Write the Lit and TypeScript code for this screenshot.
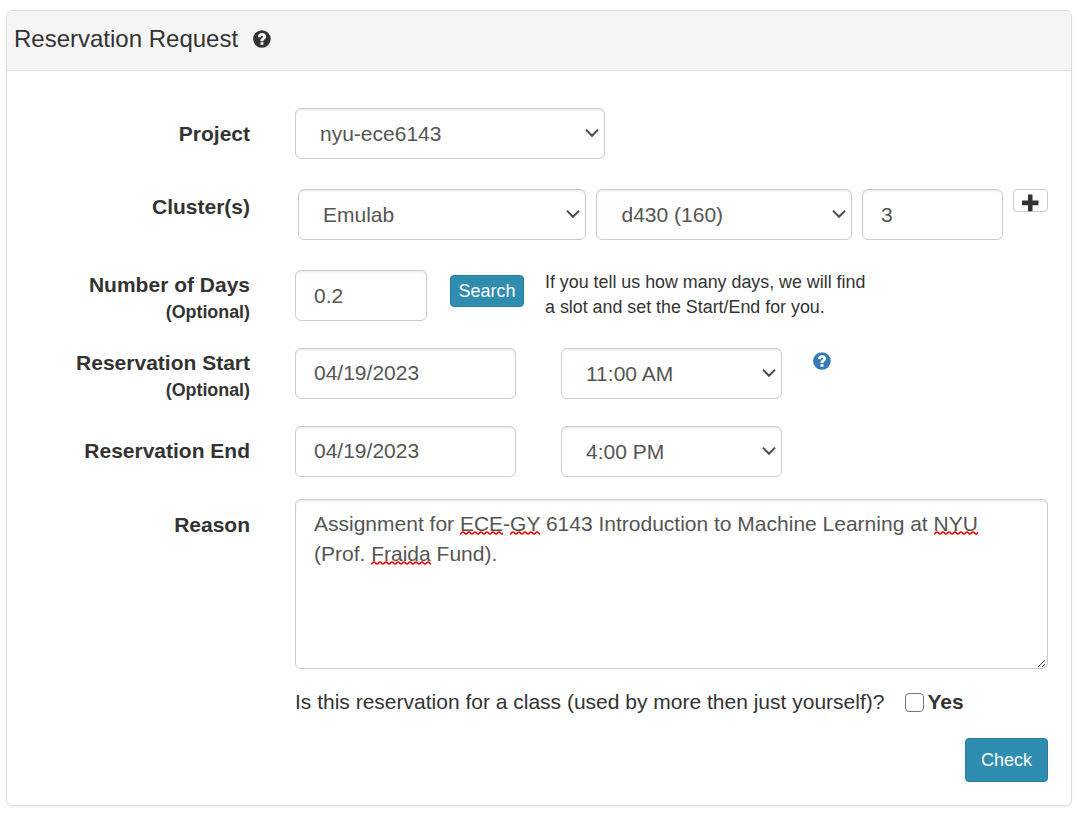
import { LitElement, html, svg, css } from "lit";
import { customElement } from "lit/decorators.js";

const chevron = html`<svg class="chev" width="16" height="12" viewBox="0 0 16 12">
  <path d="M2 2.600 8 8.800 14 2.600" fill="none" stroke="#4a4a4a" stroke-width="2" />
</svg>`;

const mark = svg`<path fill-rule="evenodd" d="M8.900 .2a8.800 8.800 0 1 1 0 17.600A8.800 8.800 0 0 1 8.900 .2ZM7.500 12.200v2.600h3v-2.600ZM4.900 7.200h2.900c0-1 .4-1.500 1.100-1.500.7 0 1.100.4 1.100.9 0 .5-.3.800-1 1.300-1.100.8-1.500 1.400-1.500 2.700v.600h3v-.2c0-.8.300-1.100 1.100-1.700 1-.7 1.500-1.500 1.500-2.700 0-2.100-1.600-3.500-4.100-3.500-2.400 0-4 1.400-4.100 4.100Z" />`;

const help = (cls: string) => html`<svg class=${cls} width="18" height="18" viewBox="0 0 18 18">${mark}</svg>`;

@customElement("app-root")
export class AppRoot extends LitElement {
  static styles = css`
    :host {
      display: block;
      box-sizing: border-box;
      height: 813px;
      padding: 10px 16px 7px 6px;
      background: #fff;
      color: #333;
      font: 21px/30px "Liberation Sans", Arial, sans-serif;
      overflow: hidden;
    }
    * { box-sizing: border-box; }
    .panel {
      height: 796px;
      border: 1px solid #ddd;
      border-radius: 6px;
      box-shadow: 0 1.5px 1.5px rgba(0, 0, 0, 0.05);
    }
    .head {
      display: flex;
      height: 60px;
      padding: 13px 7px;
      background: #f5f5f5;
      border-bottom: 1px solid #ddd;
      border-radius: 5px 5px 0 0;
      font-size: 24px;
    }
    .title { width: 239px; white-space: nowrap; }
    .dark { fill: #333; margin-top: 6px; }
    .blue { fill: #337ab7; margin: 4px 0 0 31px; }
    .body { padding-top: 37px; }
    .row { display: flex; align-items: flex-start; }
    .label {
      flex: none;
      width: 243px;
      margin-right: 45px;
      text-align: right;
      font-weight: bold;
      white-space: nowrap;
    }
    .label small { display: block; font-size: 17.85px; line-height: 24px; }
    .field {
      flex: none;
      display: flex;
      justify-content: space-between;
      height: 51px;
      padding: 10px 4px 9px 18px;
      border: 1px solid #ccc;
      border-radius: 6px;
      box-shadow: inset 0 1.5px 1.5px rgba(0, 0, 0, 0.075);
      color: #555;
      white-space: nowrap;
    }
    .select { padding-left: 24px; }
    .chev { flex: none; margin-top: 8px; }
    .project { height: 81px; }
    .project .label { padding-top: 11px; }
    .project .field { width: 310px; }
    .cluster { height: 81px; }
    .cluster .label { padding-top: 3px; margin-right: 48px; }
    .cluster .field { margin-right: 10px; }
    .site { width: 288px; }
    .type { width: 256px; padding-left: 24.5px; }
    .count { width: 141px; }
    .plus {
      display: flex;
      justify-content: center;
      width: 35px;
      height: 23px;
      padding-top: 4px;
      border: 1px solid #ccc;
      border-radius: 4px;
    }
    .plus svg { flex: none; }
    .days { height: 78px; }
    .days .field { width: 132px; }
    .search, .check {
      background: #2f8daf;
      border: 1px solid #297c9a;
      border-radius: 4px;
      color: #fff;
      font-size: 18px;
      text-align: center;
    }
    .search { width: 74px; height: 32px; margin: 5px 21px 0 23px; }
    .hint { font-size: 17.85px; line-height: 25px; white-space: nowrap; }
    .start { height: 78px; }
    .date { width: 221px; margin-right: 45px; padding-top: 9px; }
    .time { width: 221px; }
    .end { height: 73px; }
    .end .label { padding-top: 10px; }
    .reason .label { padding-top: 11px; }
    .area {
      position: relative;
      display: block;
      width: 753px;
      height: 170px;
      padding-top: 9px;
    }
    .bad {
      background: url("data:image/svg+xml,%3Csvg xmlns='http://www.w3.org/2000/svg' width='6' height='4'%3E%3Cpath d='M-3 .9C-1.500 .9-1.500 3.100 0 3.100S1.500 .9 3 .9 4.500 3.100 6 3.100 7.500 .9 9 .9' fill='none' stroke='red' stroke-width='1.500'/%3E%3C/svg%3E") left bottom repeat-x;
    }
    .area .grip { position: absolute; right: 0; bottom: 0; }
    .class { margin: 18px 0 0 288px; }
    .box {
      width: 19px;
      height: 19px;
      margin: 6px 4px 0 20.500px;
      border: 1.500px solid #767676;
      border-radius: 4px;
    }
    .class b { margin-left: -0.500px; }
    .foot { display: flex; justify-content: flex-end; padding: 21px 23px 0 0; }
    .check { width: 83px; height: 44px; line-height: 42px; }
  `;

  private select(cls: string, text: string) {
    return html`<div class="field select ${cls}"><span>${text}</span>${chevron}</div>`;
  }

  render() {
    return html`
      <div class="panel">
        <div class="head"><span class="title">Reservation Request</span>${help("dark")}</div>
        <div class="body">
          <div class="row project">
            <div class="label">Project</div>
            ${this.select("", "nyu-ece6143")}
          </div>
          <div class="row cluster">
            <div class="label">Cluster(s)</div>
            ${this.select("site", "Emulab")} ${this.select("type", "d430 (160)")}
            <div class="field count">3</div>
            <div class="plus">
              <svg width="19" height="18" viewBox="0 0 19 18"><path fill="#333" d="M7 .500h4.500v6H17.500v4.700h-6v6H7v-6H1V6.500h6Z" /></svg>
            </div>
          </div>
          <div class="row days">
            <div class="label">Number of Days<small>(Optional)</small></div>
            <div class="field">0.2</div>
            <div class="search">Search</div>
            <div class="hint">If you tell us how many days, we will find<br />a slot and set the Start/End for you.</div>
          </div>
          <div class="row start">
            <div class="label">Reservation Start<small>(Optional)</small></div>
            <div class="field date">04/19/2023</div>
            ${this.select("time", "11:00 AM")} ${help("blue")}
          </div>
          <div class="row end">
            <div class="label">Reservation End</div>
            <div class="field date">04/19/2023</div>
            ${this.select("time", "4:00 PM")}
          </div>
          <div class="row reason">
            <div class="label">Reason</div>
            <div class="field area">Assignment for <span class="bad">ECE</span>-<span class="bad">GY</span> 6143 Introduction to Machine Learning at <span class="bad">NYU</span><br />(Prof. <span class="bad">Fraida</span> Fund).<svg class="grip" width="10" height="10" viewBox="0 0 10 10"><path d="M1 9 8 2M5 9 8 6" stroke="#555" stroke-width="1" fill="none" /></svg></div>
          </div>
          <div class="row class">
            <span>Is this reservation for a class (used by more then just yourself)?</span>
            <span class="box"></span><b>Yes</b>
          </div>
          <div class="foot"><div class="check">Check</div></div>
        </div>
      </div>
    `;
  }
}
